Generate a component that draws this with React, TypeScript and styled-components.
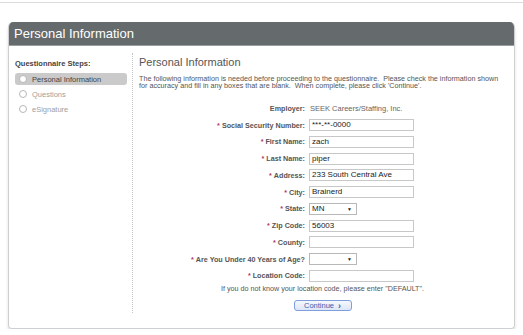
import React from "react"
import styled, { createGlobalStyle } from "styled-components"

const GlobalStyle = createGlobalStyle`
  body {
    margin: 0;
    background: #fff;
    font-family: "Liberation Sans", Arial, sans-serif;
  }
`

type Field = {
  label: string
  required?: boolean
  kind: "text" | "input" | "select"
  value?: string
}

const fields: Field[] = [
  { label: "Employer:", kind: "text", value: "SEEK Careers/Staffing, Inc." },
  { label: "Social Security Number:", required: true, kind: "input", value: "***-**-0000" },
  { label: "First Name:", required: true, kind: "input", value: "zach" },
  { label: "Last Name:", required: true, kind: "input", value: "piper" },
  { label: "Address:", required: true, kind: "input", value: "233 South Central Ave" },
  { label: "City:", required: true, kind: "input", value: "Brainerd" },
  { label: "State:", required: true, kind: "select", value: "MN" },
  { label: "Zip Code:", required: true, kind: "input", value: "56003" },
  { label: "County:", required: true, kind: "input", value: "" },
  { label: "Are You Under 40 Years of Age?", required: true, kind: "select", value: "" },
  { label: "Location Code:", required: true, kind: "input", value: "" },
]

const steps = ["Personal Information", "Questions", "eSignature"]

const App = () => {
  return (
    <>
      <GlobalStyle />
      <TopRule />
      <Page>
        <Card>
          <Header>{"Personal Information"}</Header>
          <Body>
            <Sidebar>
              <SideTitle>{"Questionnaire Steps:"}</SideTitle>
              {steps.map((step, i) => (
                <Step key={step} isActive={i === 0}>
                  <Radio />
                  {step}
                </Step>
              ))}
            </Sidebar>
            <Main>
              <Heading>{"Personal Information"}</Heading>
              <Intro>
                {
                  "The following information is needed before proceeding to the questionnaire.\u00a0 Please check the information shown for accuracy and fill in any boxes that are blank.\u00a0 When complete, please click 'Continue'."
                }
              </Intro>
              <Form>
                {fields.map((f) => (
                  <React.Fragment key={f.label}>
                    <Label>
                      {f.required && <Star>{"*"}</Star>}
                      {f.label}
                    </Label>
                    {f.kind === "text" && <Plain>{f.value}</Plain>}
                    {f.kind === "input" && <Input>{f.value}</Input>}
                    {f.kind === "select" && (
                      <Select>
                        <span>{f.value}</span>
                        <Caret>{"▼"}</Caret>
                      </Select>
                    )}
                  </React.Fragment>
                ))}
              </Form>
              <Note>{"If you do not know your location code, please enter \"DEFAULT\"."}</Note>
              <ButtonRow>
                <ContinueButton>
                  {"Continue"}
                  <Chevron>{"›"}</Chevron>
                </ContinueButton>
              </ButtonRow>
            </Main>
          </Body>
        </Card>
      </Page>
    </>
  )
}

export default App

const TopRule = styled.div`
  height: 1px;
  margin-top: 2px;
  background: #dcdcdc;
`

const Page = styled.div`
  padding: 19px 8px 0 8px;
`

const Card = styled.div`
  width: 507px;
  border-radius: 5px 5px 4px 4px;
  border: 1px solid #cfcfcf;
  border-top: none;
  box-shadow: 0 3px 3px rgba(0, 0, 0, 0.14);
  box-sizing: border-box;
  overflow: hidden;
`

const Header = styled.div`
  height: 24px;
  background: #656b6c;
  border-bottom: 1px solid #9aa0a0;
  color: #fff;
  font-size: 13px;
  line-height: 24px;
  padding-left: 5px;
  box-sizing: border-box;
`

const Body = styled.div`
  display: flex;
  padding: 7px 0 15px 0;
  height: 282px;
  box-sizing: border-box;
`

const Sidebar = styled.div`
  width: 124px;
  border-right: 1px dotted #c4c4c4;
  padding: 6px 5px 0 6px;
  box-sizing: border-box;
`

const SideTitle = styled.div`
  font-size: 7.5px;
  font-weight: bold;
  color: #444;
  margin-bottom: 5px;
`

const Step = styled.div<{ isActive: boolean }>`
  display: flex;
  align-items: center;
  gap: 5px;
  height: 12px;
  padding-left: 3px;
  margin-bottom: 3px;
  border-radius: 3px;
  font-size: 7.5px;
  color: ${(p) => (p.isActive ? "#444" : "#a0a0a0")};
  background: ${(p) => (p.isActive ? "#cacaca" : "transparent")};
`

const Radio = styled.span`
  width: 8px;
  height: 8px;
  border-radius: 50%;
  border: 1px solid #b8b8b8;
  background: #fff;
  box-sizing: border-box;
  margin-left: 1px;
`

const Main = styled.div`
  flex: 1;
  padding: 3px 8px 0 6px;
  display: flex;
  flex-direction: column;
`

const Heading = styled.div`
  font-size: 11px;
  color: #555;
  margin-bottom: 7px;
`

const Intro = styled.div`
  font-size: 7.2px;
  line-height: 7px;
  color: #555;
  margin-bottom: 11px;
`

const Form = styled.div`
  display: grid;
  grid-template-columns: 166px 1fr;
  column-gap: 4px;
  grid-auto-rows: 16.75px;
  align-items: center;
`

const Label = styled.div`
  text-align: right;
  font-size: 7.2px;
  font-weight: bold;
  color: #555;
  white-space: nowrap;
`

const Star = styled.span`
  color: #b03565;
  margin-right: 2px;
`

const Plain = styled.div`
  font-size: 7.5px;
  color: #666;
  padding-left: 1px;
`

const Input = styled.div`
  width: 105px;
  height: 12px;
  border: 1px solid #c8c8c8;
  box-sizing: border-box;
  font-size: 8px;
  line-height: 10px;
  padding-left: 2px;
  color: #222;
  background: #fff;
`

const Select = styled.div`
  width: 48px;
  height: 12px;
  border: 1px solid #b8b8b8;
  box-sizing: border-box;
  display: flex;
  align-items: center;
  justify-content: space-between;
  font-size: 8px;
  padding: 0 4px 0 2px;
  color: #222;
`

const Caret = styled.span`
  font-size: 5px;
  color: #222;
`

const Note = styled.div`
  text-align: center;
  font-size: 7.2px;
  color: #555;
  margin-top: 0;
`

const ButtonRow = styled.div`
  display: flex;
  justify-content: center;
  margin-top: 7px;
`

const ContinueButton = styled.button`
  width: 58px;
  height: 11px;
  border: 1px solid #7f9fdc;
  border-radius: 3px;
  background: linear-gradient(#f6f8fd, #dde6f7);
  color: #3a5fb0;
  font-family: "Liberation Sans", Arial, sans-serif;
  font-size: 7.5px;
  display: flex;
  align-items: center;
  justify-content: center;
  gap: 4px;
  padding: 0;
`

const Chevron = styled.span`
  font-size: 9px;
  font-weight: bold;
  line-height: 8px;
`
